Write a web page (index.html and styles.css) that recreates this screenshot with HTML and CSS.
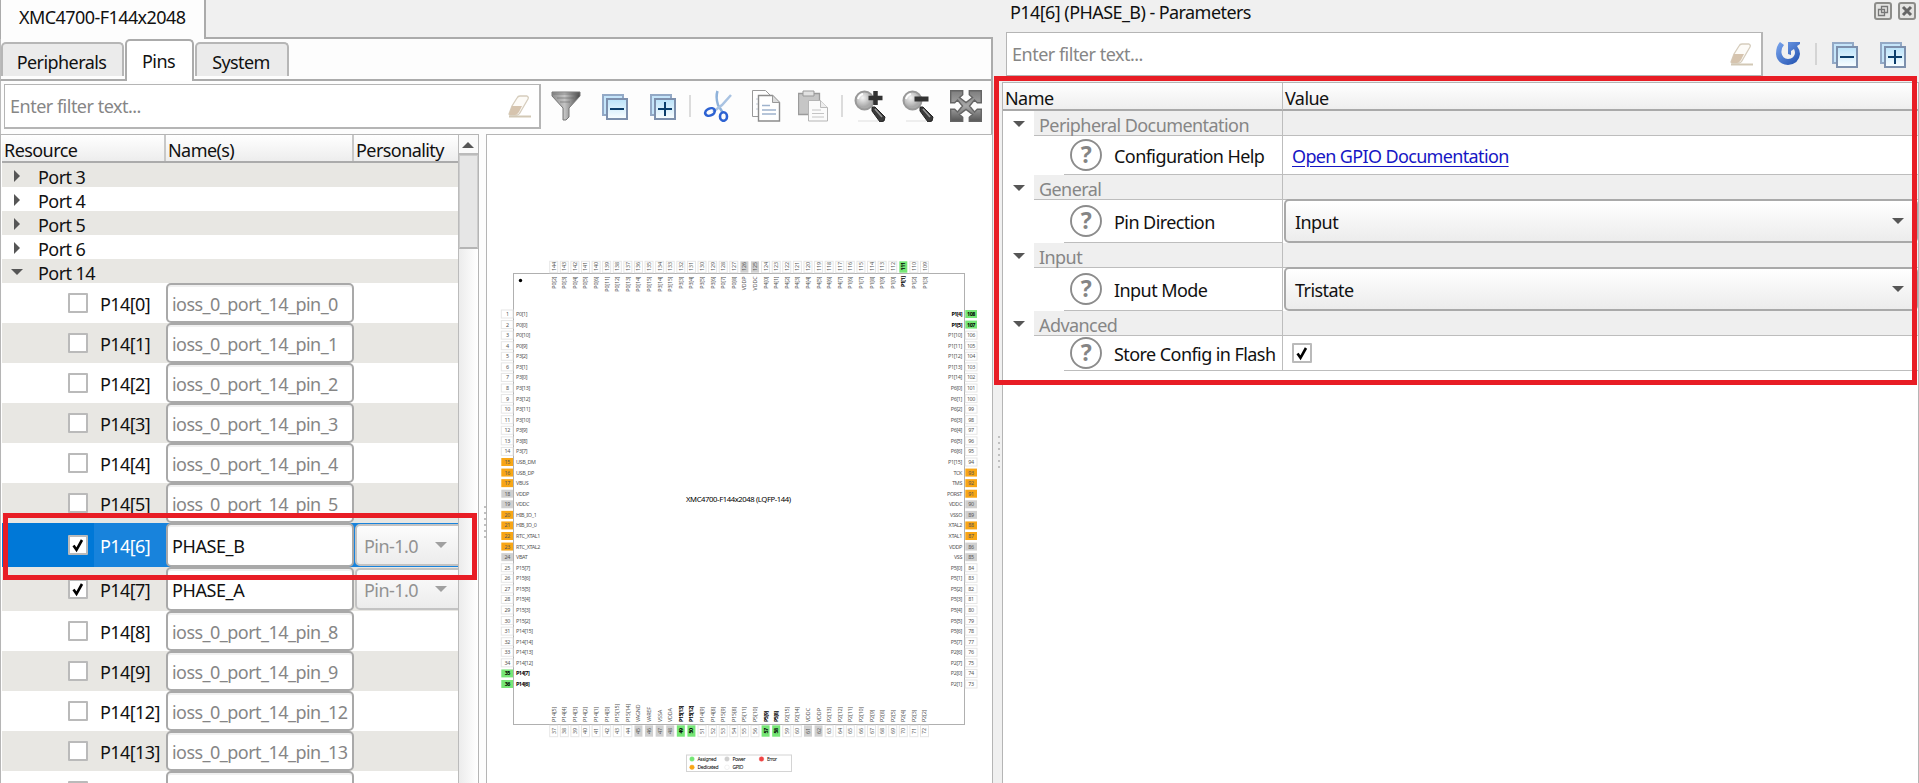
FILE: index.html
```html
<!DOCTYPE html>
<html lang="en">
<head>
<meta charset="utf-8">
<title>Device Configurator</title>
<link rel="stylesheet" href="styles.css">
</head>
<body>
<svg class="defs" width="0" height="0">
  <defs>
    <linearGradient id="gPaper" x1="0" y1="0" x2="0" y2="1"><stop offset="0" stop-color="#b9e2fa"/><stop offset="1" stop-color="#fafeff"/></linearGradient>
    <linearGradient id="gFunnel"><stop offset="0" stop-color="#8d8d8d"/><stop offset=".45" stop-color="#c4c4c4"/><stop offset="1" stop-color="#484848"/></linearGradient>
    <linearGradient id="gFit" x1="0" y1="0" x2="0" y2="1"><stop offset="0" stop-color="#7d7d7d"/><stop offset=".5" stop-color="#a8a8a8"/><stop offset="1" stop-color="#555"/></linearGradient>
    <radialGradient id="gLens" cx=".4" cy=".35"><stop offset="0" stop-color="#f4f4f4"/><stop offset="1" stop-color="#aaa"/></radialGradient>
    <linearGradient id="gBlue" x1="0" y1="0" x2="1" y2="1"><stop offset="0" stop-color="#7ba6ee"/><stop offset="1" stop-color="#1f4fae"/></linearGradient>
  </defs>
  <symbol id="collapse" viewBox="0 0 32 32"><path d="M5 5h20v20H5z" fill="#c5e5fa" stroke="#93a9c6" stroke-width="2"/><path d="M9 9h20v20H9z" fill="url(#gPaper)" stroke="#7d90ad" stroke-width="2"/><path d="M12 19h14" stroke="#0b3d6b" stroke-width="2"/></symbol>
  <symbol id="expand" viewBox="0 0 32 32"><use href="#collapse"/><path d="M19 12v14" stroke="#0b3d6b" stroke-width="2"/></symbol>
  <symbol id="eraser" viewBox="0 0 24 24"><path d="M1 20l3-8 5-8q1-2 3-2h7q2 1 1 3l-7 12q-2 4-4 4H2z" fill="#fdfbf7" stroke="#d6cdbd" stroke-width="1.300"/><path d="M1 20l3-8h10l-3 6q-2 3-4 3H2z" fill="#d6c4ae"/><path d="M1 22.500h22" stroke="#d2c8b5" stroke-width="2"/></symbol>
  <symbol id="lens" viewBox="0 0 32 32"><path d="M4 31h20" stroke="#e8e8e8" stroke-width="1.5"/><path d="M18 17l3 0 10 10-1 4-4 1-8-11z" fill="#3b3b3b" stroke="#222"/><path d="M21 19l7 8" stroke="#999" stroke-width="1.5"/><circle cx="10.500" cy="10.500" r="9" fill="url(#gLens)" stroke="#999" stroke-width="2"/><path d="M4 9q1-4 5-5" stroke="#fff" stroke-width="2" fill="none"/></symbol>
  <symbol id="help" viewBox="0 0 32 32"><circle cx="16" cy="16" r="15" fill="#fff" stroke="#8c8c8c" stroke-width="1.900"/><text x="16" y="24" text-anchor="middle" font-family="Noto Sans" font-weight="700" font-size="23" fill="#858585">?</text></symbol>
  <symbol id="tick" viewBox="0 0 20 20"><path d="M5.500 10.500l3 4.300L14 5" fill="none" stroke="#000" stroke-width="2.600"/></symbol>
</svg>

<div class="app">
  <main class="left">
    <div class="doc-tabs"><div class="doc-tab"><span class="t">XMC4700-F144x2048</span></div></div>
    <div class="tabs">
      <div class="tab w1"><span class="t">Peripherals</span></div>
      <div class="tab active w2"><span class="t">Pins</span></div>
      <div class="tab w3"><span class="t">System</span></div>
    </div>
    <div class="toolbar">
      <div class="filter"><span class="t">Enter filter text...</span><svg width="24" height="24"><use href="#eraser"/></svg></div>
      <svg class="ic" viewBox="0 0 32 32"><path d="M2 2h28v4L19 18v9l-3 3h-3V18L2 6z" fill="url(#gFunnel)" stroke="#777"/><path d="M3 4h26M7 8h17M10 12h10" stroke="#666" opacity=".6"/></svg>
      <svg class="ic"><use href="#collapse"/></svg>
      <svg class="ic"><use href="#expand"/></svg>
      <i class="sep"></i>
      <svg class="ic" viewBox="0 0 32 32"><path d="M15.500 1q-2 6 .5 14l5 8" stroke="#8fb2da" stroke-width="2.500" fill="none"/><path d="M29 5l-9 10-9 7" stroke="#a9c3e2" stroke-width="2.500" fill="none"/><ellipse cx="8" cy="22" rx="5" ry="3.500" transform="rotate(-25 8 22)" fill="none" stroke="#2d62d2" stroke-width="2.600"/><ellipse cx="21.500" cy="26.500" rx="3.500" ry="4.300" fill="none" stroke="#2d62d2" stroke-width="2.600"/></svg>
      <svg class="ic" viewBox="0 0 32 32"><path d="M2.500.5h13l5 5v21h-18z" fill="#fff" stroke="#999"/><path d="M6 9h3M6 14h3M6 19h3" stroke="#c4ccd8"/><path d="M8.500 5.500h14l7 7v18.500h-21z" fill="#fff" stroke="#8c8c8c" stroke-width="1.400"/><path d="M22.500 5.500v7h7" fill="#ddd" stroke="#999"/><path d="M12 15.500h8M12 20h14M12 24h14" stroke="#9fb3cd" stroke-width="1.500"/></svg>
      <svg class="ic" viewBox="0 0 32 32"><path d="M.5 3.500h21v21H.5z" fill="#c6c6c6" stroke="#9b9b9b" stroke-width="1.300"/><path d="M5 1h11v5H5z" fill="#e2e2e2" stroke="#999"/><path d="M10.500 10.500h12l7 7v13.500h-19z" fill="#fbfbfb" stroke="#b5b5b5"/><path d="M22.500 10.500v7h7" fill="#eee" stroke="#bbb"/><path d="M14 20h9M14 23.500h12M14 27h12" stroke="#c4c4c4"/></svg>
      <i class="sep"></i>
      <svg class="ic" viewBox="0 0 32 32"><use href="#lens"/><path d="M21.500 1v14M14.500 8h14" stroke="#333" stroke-width="4.500"/></svg>
      <svg class="ic" viewBox="0 0 32 32"><use href="#lens"/><path d="M12.500 9h14" stroke="#333" stroke-width="5"/></svg>
      <svg class="ic" viewBox="0 0 32 32"><path d="M.7.700h12v4L9.500 7.500l6.500 5 6.500-5-3.200-2.800v-4h12v12h-4L24.500 10l-5 6 5 6 2.800-2.700h4v12h-12v-4l3.200-2.800-6.500-5-6.500 5 3.200 2.800v4H.700v-12h4L7.500 22l5-6-5-6-2.800 2.700h-4z" fill="url(#gFit)" stroke="#656565" stroke-width="1.400"/></svg>
    </div>
    <div class="work">
      <div class="tree">
        <div class="rows">
          <div class="row head"><div><span class="t">Resource</span></div><div><span class="t">Name(s)</span></div><div><span class="t">Personality</span></div></div>
          <div class="port alt"><i class="right"></i><span class="t">Port 3</span></div>
          <div class="port"><i class="right"></i><span class="t">Port 4</span></div>
          <div class="port alt"><i class="right"></i><span class="t">Port 5</span></div>
          <div class="port"><i class="right"></i><span class="t">Port 6</span></div>
          <div class="port alt"><i class="down"></i><span class="t">Port 14</span></div>
          <div class="row pin"><div><i class="cb"></i><span class="t">P14[0]</span></div><div class="in"><span class="t">ioss_0_port_14_pin_0</span></div></div>
          <div class="row pin alt"><div><i class="cb"></i><span class="t">P14[1]</span></div><div class="in"><span class="t">ioss_0_port_14_pin_1</span></div></div>
          <div class="row pin"><div><i class="cb"></i><span class="t">P14[2]</span></div><div class="in"><span class="t">ioss_0_port_14_pin_2</span></div></div>
          <div class="row pin alt"><div><i class="cb"></i><span class="t">P14[3]</span></div><div class="in"><span class="t">ioss_0_port_14_pin_3</span></div></div>
          <div class="row pin"><div><i class="cb"></i><span class="t">P14[4]</span></div><div class="in"><span class="t">ioss_0_port_14_pin_4</span></div></div>
          <div class="row pin alt"><div><i class="cb"></i><span class="t">P14[5]</span></div><div class="in"><span class="t">ioss_0_port_14_pin_5</span></div></div>
          <div class="row pin big sel"><div><i class="cb"><svg width="20" height="20"><use href="#tick"/></svg></i><span class="t">P14[6]</span></div><div class="in on"><span class="t">PHASE_B</span></div><div class="combo"><span class="t">Pin-1.0</span><i class="down"></i></div></div>
          <div class="row pin big alt"><div><i class="cb"><svg width="20" height="20"><use href="#tick"/></svg></i><span class="t">P14[7]</span></div><div class="in on"><span class="t">PHASE_A</span></div><div class="combo"><span class="t">Pin-1.0</span><i class="down"></i></div></div>
          <div class="row pin"><div><i class="cb"></i><span class="t">P14[8]</span></div><div class="in"><span class="t">ioss_0_port_14_pin_8</span></div></div>
          <div class="row pin alt"><div><i class="cb"></i><span class="t">P14[9]</span></div><div class="in"><span class="t">ioss_0_port_14_pin_9</span></div></div>
          <div class="row pin"><div><i class="cb"></i><span class="t">P14[12]</span></div><div class="in"><span class="t">ioss_0_port_14_pin_12</span></div></div>
          <div class="row pin alt"><div><i class="cb"></i><span class="t">P14[13]</span></div><div class="in"><span class="t">ioss_0_port_14_pin_13</span></div></div>
          <div class="row pin"><div><i class="cb"></i></div><div class="in"></div></div>
        </div>
        <div class="scroll"><div class="up"><i></i></div><div class="thumb"></div></div>
      </div>
      <div class="split s1"><i></i><i></i><i></i><i></i><i></i><i></i></div>
      <div class="canvas"><svg id="chip" width="505" height="648" viewBox="487 135 505 648"></svg></div>
    </div>
  </main>

  <div class="split s2"><i></i><i></i><i></i><i></i><i></i><i></i></div>

  <aside class="right-pane">
    <div class="title"><span class="t">P14[6] (PHASE_B) - Parameters</span>
      <svg width="18" height="18" viewBox="0 0 18 18"><rect x="1" y="1" width="16" height="16" rx="2" fill="#e4e4e2" stroke="#8d8d8a" stroke-width="2"/><path d="M7.500 4.500h6v6h-6zM4.500 7.500h6v6h-6z" fill="none" stroke="#777" stroke-width="1.300"/></svg>
      <svg width="18" height="18" viewBox="0 0 18 18"><rect x="1" y="1" width="16" height="16" rx="2" fill="#e4e4e2" stroke="#8d8d8a" stroke-width="2"/><path d="M5 5l8 8M13 5l-8 8" stroke="#666" stroke-width="3"/></svg>
    </div>
    <div class="toolbar2">
      <div class="filter"><span class="t">Enter filter text...</span><svg width="24" height="24"><use href="#eraser"/></svg></div>
      <svg class="reload" width="24" height="24" viewBox="0 0 24 24"><path d="M4 1l4 3q-3 3-2.500 8 .8 5.500 6.500 6 6.500-.5 7-6 0-2-1-4l-3 2v4l-3-1V1h12v2l-3 2q3 4 3 8-1 10-12 11Q1 23 0 13 0 5 4 1z" fill="url(#gBlue)"/></svg>
      <i class="sep"></i>
      <svg class="ic"><use href="#collapse"/></svg>
      <svg class="ic"><use href="#expand"/></svg>
    </div>
    <div class="props">
      <div class="prow phead"><div><span class="t">Name</span></div><div><span class="t">Value</span></div></div>
      <div class="prow group"><i class="down"></i><div><span class="t">Peripheral Documentation</span></div><div></div></div>
      <div class="prow leaf h40"><div><svg width="32" height="32"><use href="#help"/></svg><span class="t">Configuration Help</span></div><div><a class="t">Open GPIO Documentation</a></div></div>
      <div class="prow group"><i class="down"></i><div><span class="t">General</span></div><div></div></div>
      <div class="prow leaf h44"><div><svg width="32" height="32"><use href="#help"/></svg><span class="t">Pin Direction</span></div><div class="select"><span class="t">Input</span><i class="down"></i></div></div>
      <div class="prow group"><i class="down"></i><div><span class="t">Input</span></div><div></div></div>
      <div class="prow leaf h44"><div><svg width="32" height="32"><use href="#help"/></svg><span class="t">Input Mode</span></div><div class="select"><span class="t">Tristate</span><i class="down"></i></div></div>
      <div class="prow group"><i class="down"></i><div><span class="t">Advanced</span></div><div></div></div>
      <div class="prow leaf h36"><div><svg width="32" height="32"><use href="#help"/></svg><span class="t">Store Config in Flash</span></div><div><i class="cb"><svg width="20" height="20"><use href="#tick"/></svg></i></div></div>
    </div>
  </aside>
</div>
<div class="mark m1"></div>
<div class="mark m2"></div>
<script src="chip.js"></script>
</body>
</html>
```

FILE: styles.css
```css
* { box-sizing: border-box; }
body { margin: 0; width: 1919px; height: 783px; overflow: hidden; background: #f0f0f0; color: #111; font: 18px/24px "Noto Sans", "Open Sans", sans-serif; letter-spacing: -0.57px; }
.defs { position: absolute; }
i { display: block; flex: none; }
svg { display: block; flex: none; }
.t { white-space: nowrap; position: relative; top: 1px; }
.app { display: flex; height: 783px; }

/* left editor */
.left { width: 993px; height: 783px; display: flex; flex-direction: column; }
.doc-tabs { height: 37px; flex: none; }
.doc-tab { position: relative; z-index: 1; width: 206px; height: 39px; background: #fdfdfd; border: solid #ababab; border-width: 0 2px 0 1px; padding: 4px 0 0 18px; }
.tabs { flex: none; height: 44px; border: 2px solid #ababab; border-left: 1px solid #bbb; background: #fdfdfd; display: flex; align-items: flex-start; gap: 1px; }
.tab { margin-top: 3px; height: 34px; background: #ebebeb; border: 2px solid #b6b6b6; border-bottom: 0; border-radius: 5px 5px 0 0; display: flex; align-items: center; justify-content: center; padding: 1px 2px 0 0; }
.tab.active { margin-top: 0; height: 42px; background: #fff; border-color: #ababab; padding-bottom: 4px; z-index: 1; }
.w1 { width: 123px; }
.w2 { width: 69px; }
.w3 { width: 94px; }
.toolbar { flex: none; height: 53px; background: #fdfdfd; border-left: 1px solid #bbb; border-right: 2px solid #ababab; display: flex; align-items: flex-start; padding: 3px 0 0 3px; }
.filter { height: 45px; width: 537px; background: #fff; border: 1px solid #b5b5b5; border-right-width: 2px; border-bottom-width: 2px; display: flex; align-items: center; justify-content: space-between; padding: 0 7px 0 5px; color: #868686; }
.filter .t { top: 0; letter-spacing: -0.5px; }
.ic { width: 32px; height: 32px; margin: 6px 8px 0; }
.filter + .ic { margin-left: 9px; }
.sep { width: 2px; height: 22px; margin: 11px 3px 0; background: #dcdcdc; }
.work { flex: 1; min-height: 0; display: flex; }
.tree { width: 479px; border: 1px solid #b5b5b5; border-bottom: 0; display: flex; overflow: hidden; background: #fff; }
.rows { width: 457px; padding-left: 1px; flex: none; overflow: hidden; }
.row { display: grid; grid-template-columns: 164px 188px 104px; }
.head { height: 28px; background: linear-gradient(#fff, #ededed); border-bottom: 2px solid #ababab; }
.head > div { padding: 2px 0 0 2px; border-right: 2px solid #c8c8c8; }
.head > div:last-child { border: 0; }
.alt { background: #e8e7e3; }
.port { height: 24px; display: grid; grid-template-columns: 36px 1fr; align-items: center; }
.port .t { top: 2px; }
.port > i { position: relative; top: 1px; justify-self: start; }
.right { margin-left: 12px; border: 6px solid transparent; border-left-color: #565656; border-right: 0; }
.down { border: 6px solid transparent; border-top-color: #565656; border-bottom: 0; }
.port .down { margin-left: 9px; }
.pin { height: 40px; }
.big { height: 44px; }
.pin > div:first-child { display: flex; align-items: center; padding-left: 66px; gap: 12px; }
.cb { width: 20px; height: 20px; border: 2px solid #bababa; border-radius: 1px; background: #fff; }
.cb svg { margin: -2px; }
.in { border: 2px solid #a9a9a9; border-radius: 5px; background: #fff; box-shadow: inset 0 2px #f0f0f0; display: flex; align-items: center; padding-left: 4px; color: #868686; width: 188px; letter-spacing: -0.54px; }
.on { color: #111; letter-spacing: -0.4px; }
.combo { margin: 1px -6px 1px 1px; border: 2px solid #c3c3c3; border-radius: 5px 0 0 5px; background: linear-gradient(#fcfcfc, #ececec); display: flex; align-items: center; padding-left: 7px; color: #929292; }
.combo .down { margin-left: 17px; border-top-color: #a0a0a0; }
.sel { background: linear-gradient(90deg, #0078d7 92px, #1883dc 92px); color: #fff; }
.scroll { width: 20px; flex: 1; border-left: 1px solid #bbb; background: linear-gradient(90deg, #ececec, #fff); }
.up { height: 20px; background: #fafafa; border-bottom: 2px solid #bbb; padding: 7px 0 0 3px; }
.up i { width: 12px; border: 6px solid transparent; border-bottom-color: #565656; border-top: 0; }
.thumb { height: 94px; background: #e6e6e6; border: 1px solid #ccc; border-bottom: 2px solid #b5b5b5; }
.split { display: flex; flex-direction: column; gap: 4px; }
.split i { width: 2px; height: 2px; background: #c0c0c0; }
.s1 { width: 7px; background: #fdfdfd; padding: 372px 0 0 5px; }
.s2 { width: 9px; padding: 436px 0 0 5px; }
.canvas { flex: 1; background: #fff; border: 1px solid #b5b5b5; border-bottom: 0; overflow: hidden; }

/* parameters pane */
.right-pane { width: 917px; display: flex; flex-direction: column; }
.title { height: 32px; padding: 1px 3px 0 8px; display: flex; gap: 6px; }
.title .t { margin-right: auto; top: -1px; }
.title svg { margin-top: 1px; }
.toolbar2 { height: 50px; padding-left: 4px; display: flex; align-items: flex-start; }
.toolbar2 .filter { width: 757px; height: 44px; border-bottom-width: 1px; }
.reload { margin: 9px 0 0 13px; }
.toolbar2 .sep { margin: 11px 3px 0 15px; background: #d4d4d4; }
.toolbar2 .ic { margin-right: 8px; }
.props { flex: 1; background: #fff; border: 1px solid #b5b5b5; border-bottom: 0; }
.prow { display: grid; grid-template-columns: 280px 1fr; }
.prow > div { display: flex; align-items: center; border-bottom: 1px solid #bdbdbd; }
.prow > div:nth-of-type(1) { border-right: 1px solid #bdbdbd; }
.phead { height: 28px; background: linear-gradient(#fff, #ededed); }
.phead > div { border-bottom: 2px solid #a9a9a9; padding: 2px 0 0 2px; }
.group { height: 24px; grid-template-columns: 31px 249px 1fr; }
.group > div { background: #efefef; color: #868686; padding-left: 5px; }
.group .down { margin: 10px 0 0 10px; justify-self: start; align-self: start; }
.group .t { top: 2px; }
.leaf > div:first-child { margin-left: 61px; padding-left: 6px; gap: 12px; }
.leaf > div:last-child { padding-left: 9px; }
.h40 { height: 40px; }
.h44 { height: 44px; }
.h36 { height: 36px; }
.leaf a { color: #1616c4; text-decoration: underline; text-underline-offset: 3px; letter-spacing: -0.65px; }
.leaf > .select { margin: 0 0 0 1px; border: 2px solid #a9a9a9; border-radius: 5px; background: linear-gradient(#fff, #ececec); justify-content: space-between; padding: 0 12px 0 7px; }

/* highlight frames */
.mark { position: absolute; border: 5px solid #e81d25; }
.m1 { left: 3px; top: 513px; width: 474px; height: 67px; }
.m2 { left: 994px; top: 76px; width: 923px; height: 309px; }

/* package drawing */
#chip text { font-family: "Noto Sans", sans-serif; font-size: 5.4px; letter-spacing: -0.35px; fill: #555; }
#chip .b { font-weight: 700; fill: #000; letter-spacing: -0.5px; }
#chip .v { letter-spacing: -0.15px; }
#chip .name { font-size: 7.7px; fill: #000; letter-spacing: -0.1px; }
#chip .leg { font-size: 5px; fill: #000; letter-spacing: 0; }
```

FILE: chip.js
```js
const svg = document.getElementById('chip');
const seq = (port, from, to) => {
  const out = [];
  const d = from < to ? 1 : -1;
  for (let i = from; i !== to + d; i += d) out.push(`P${port}[${i}]`);
  return out;
};
// Names ordered by package pin number, 1 to 144
const names = [
  'P0[1]', 'P0[0]', 'P0[10]', 'P0[9]', 'P3[2]', 'P3[1]', 'P3[0]', ...seq(3, 13, 7),
  'USB_DM', 'USB_DP', 'VBUS', 'VDDP', 'VDDC', 'HIB_IO_1', 'HIB_IO_0', 'RTC_XTAL1', 'RTC_XTAL2', 'VBAT',
  ...seq(15, 7, 2), ...seq(14, 15, 12), 'P14[7]', 'P14[6]',
  ...seq(14, 5, 0), 'P15[15]', 'P15[14]', 'VAGND', 'VAREF', 'VSSA', 'VDDA', 'P15[13]', 'P15[12]',
  'P14[9]', 'P14[8]', 'P15[9]', 'P15[8]', ...seq(5, 11, 8), 'P2[15]', 'P2[14]', 'VDDC', 'VDDP',
  ...seq(2, 13, 8), ...seq(2, 5, 1), 'P2[0]', 'P2[7]', 'P2[6]', ...seq(5, 7, 0),
  'VSS', 'VDDP', 'XTAL1', 'XTAL2', 'VSSO', 'VDDC', 'PORST', 'TMS', 'TCK', 'P1[15]',
  ...seq(6, 6, 0), ...seq(1, 14, 10), ...seq(1, 5, 0),
  ...seq(1, 9, 6), ...seq(4, 7, 0), 'VDDC', 'VDDP', 'P0[8]', 'P0[7]', ...seq(3, 6, 3),
  'P3[15]', 'P3[14]', ...seq(0, 15, 11), ...seq(0, 6, 2)
];
const assigned = [35, 36, 49, 50, 57, 58, 107, 108, 111];
const dedicated = [15, 16, 17, 20, 21, 22, 23, 87, 88, 91, 92, 93];
const power = [18, 19, 24, 45, 46, 47, 48, 61, 62, 85, 86, 89, 90, 125, 126];
let s = '<rect x="513.5" y="273.5" width="451" height="451" fill="#fff" stroke="#b0b0b0"/><circle cx="520.5" cy="280.5" r="1.7"/>';
names.forEach((name, i) => {
  const n = i + 1, side = Math.floor(i / 36), k = i % 36;
  const fill = assigned.includes(n) ? '#76e676' : dedicated.includes(n) ? '#f8a616' : power.includes(n) ? '#d0d0d0' : '#fff';
  const line = fill === '#fff' ? '#e6e6e6' : 'none';
  const c = assigned.includes(n) ? 'class="b"' : side % 2 ? 'class="v"' : '';
  const box = (x, y, w, h) => `<rect x="${x}" y="${y}" width="${w}" height="${h}" fill="${fill}" stroke="${line}"/>`;
  if (side === 0 || side === 2) {
    const y = side === 0 ? 314 + k * 10.571 : 684 - k * 10.571;
    const left = side === 0;
    s += box(left ? 501.3 : 965.3, y - 4, 11.7, 8);
    s += `<text ${c} x="${left ? 507.3 : 971}" y="${y + 2}" text-anchor="middle">${n}</text>`;
    s += `<text ${c} x="${left ? 516 : 962}" y="${y + 2}" text-anchor="${left ? 'start' : 'end'}">${name}</text>`;
  } else {
    const x = side === 1 ? 553.7 + k * 10.594 : 924.5 - k * 10.594;
    const top = side === 3;
    s += box(x - 4, top ? 261.3 : 725.3, 8, 11.4);
    s += `<text ${c} transform="translate(${x + 2} ${top ? 266.5 : 731}) rotate(-90)" text-anchor="middle">${n}</text>`;
    s += `<text ${c} transform="translate(${x + 2} ${top ? 276.5 : 722}) rotate(-90)" text-anchor="${top ? 'end' : 'start'}">${name}</text>`;
  }
});
s += '<text class="name" x="686" y="502" textLength="105">XMC4700-F144x2048 (LQFP-144)</text>';
s += '<rect x="686.5" y="755" width="105" height="16.500" fill="#fff" stroke="#d4d4d4"/>';
[['Assigned', 692, 759, '#76e676', 19], ['Dedicated', 692, 767.3, '#f8a616', 21], ['Power', 727, 759, '#d0d0d0', 13], ['GPIO', 727, 767.3, '#fff', 11], ['Error', 761.5, 759, '#ef4444', 10]].forEach(([t, x, y, f, w]) => {
  s += `<circle cx="${x}" cy="${y}" r="2.300" fill="${f}" stroke="${f === '#fff' ? '#ddd' : f}" stroke-width=".4"/><text class="leg" x="${x + 5.5}" y="${y + 2}" textLength="${w}">${t}</text>`;
});
svg.innerHTML = s;
```
